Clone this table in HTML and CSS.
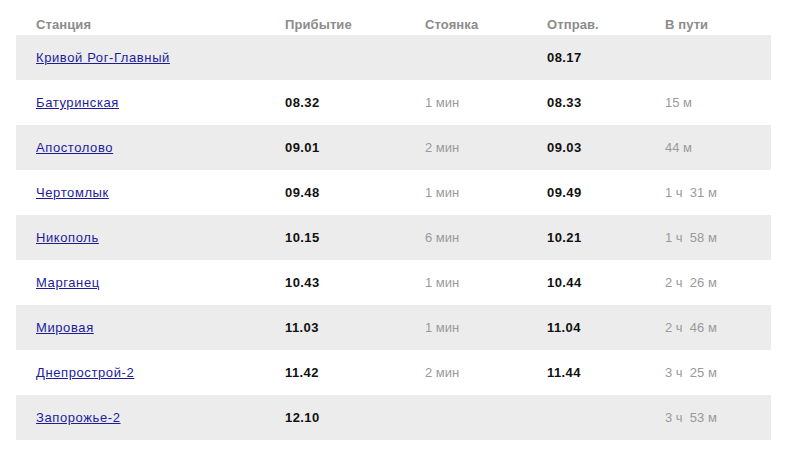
FILE: index.html
```html
<!DOCTYPE html>
<html lang="ru">
<head>
<meta charset="utf-8">
<title>Расписание</title>
<link rel="stylesheet" href="styles.css">
</head>
<body>
<div class="wrap">
<table class="route">
  <colgroup>
    <col class="c1"><col class="c2"><col class="c3"><col class="c4"><col class="c5">
  </colgroup>
  <thead>
    <tr><th>Станция</th><th>Прибытие</th><th>Стоянка</th><th>Отправ.</th><th>В пути</th></tr>
  </thead>
  <tbody>
    <tr class="odd"><td><a href="#">Кривой Рог-Главный</a></td><td class="t"></td><td class="m"></td><td class="t">08.17</td><td class="m"></td></tr>
    <tr><td><a href="#">Батуринская</a></td><td class="t">08.32</td><td class="m">1 мин</td><td class="t">08.33</td><td class="m">15 м</td></tr>
    <tr class="odd"><td><a href="#">Апостолово</a></td><td class="t">09.01</td><td class="m">2 мин</td><td class="t">09.03</td><td class="m">44 м</td></tr>
    <tr><td><a href="#">Чертомлык</a></td><td class="t">09.48</td><td class="m">1 мин</td><td class="t">09.49</td><td class="m">1 ч&nbsp; 31 м</td></tr>
    <tr class="odd"><td><a href="#">Никополь</a></td><td class="t">10.15</td><td class="m">6 мин</td><td class="t">10.21</td><td class="m">1 ч&nbsp; 58 м</td></tr>
    <tr><td><a href="#">Марганец</a></td><td class="t">10.43</td><td class="m">1 мин</td><td class="t">10.44</td><td class="m">2 ч&nbsp; 26 м</td></tr>
    <tr class="odd"><td><a href="#">Мировая</a></td><td class="t">11.03</td><td class="m">1 мин</td><td class="t">11.04</td><td class="m">2 ч&nbsp; 46 м</td></tr>
    <tr><td><a href="#">Днепрострой-2</a></td><td class="t">11.42</td><td class="m">2 мин</td><td class="t">11.44</td><td class="m">3 ч&nbsp; 25 м</td></tr>
    <tr class="odd"><td><a href="#">Запорожье-2</a></td><td class="t">12.10</td><td class="m"></td><td class="t"></td><td class="m">3 ч&nbsp; 53 м</td></tr>
  </tbody>
</table>
</div>
</body>
</html>
```
FILE: styles.css
```css
html, body {
  margin: 0;
  padding: 0;
  background: #fff;
}
.wrap {
  padding: 15px 15px 0 16px;
  font-family: "Liberation Sans", Arial, sans-serif;
  font-size: 13px;
}
.route {
  border-collapse: collapse;
  table-layout: fixed;
  width: 755px;
}
.c1 { width: 249px; }
.c2 { width: 140px; }
.c3 { width: 122px; }
.c4 { width: 118px; }
.c5 { width: 126px; }
.route th {
  text-align: left;
  font-weight: bold;
  color: #8c8c8c;
  height: 20px;
  padding: 0 0 0 20px;
  line-height: 20px;
  vertical-align: middle;
  letter-spacing: 0.1px;
}
.route td {
  height: 45px;
  padding: 0 0 0 20px;
  vertical-align: middle;
  color: #000;
}
.route tr.odd td {
  background: #ececec;
}
.route a {
  color: #1c1c9c;
  text-decoration: underline;
  letter-spacing: 0.6px;
}
.route td.t {
  font-weight: bold;
  color: #111;
  letter-spacing: 0.4px;
}
.route td.m {
  color: #9a9a9a;
  white-space: pre;
}
```
